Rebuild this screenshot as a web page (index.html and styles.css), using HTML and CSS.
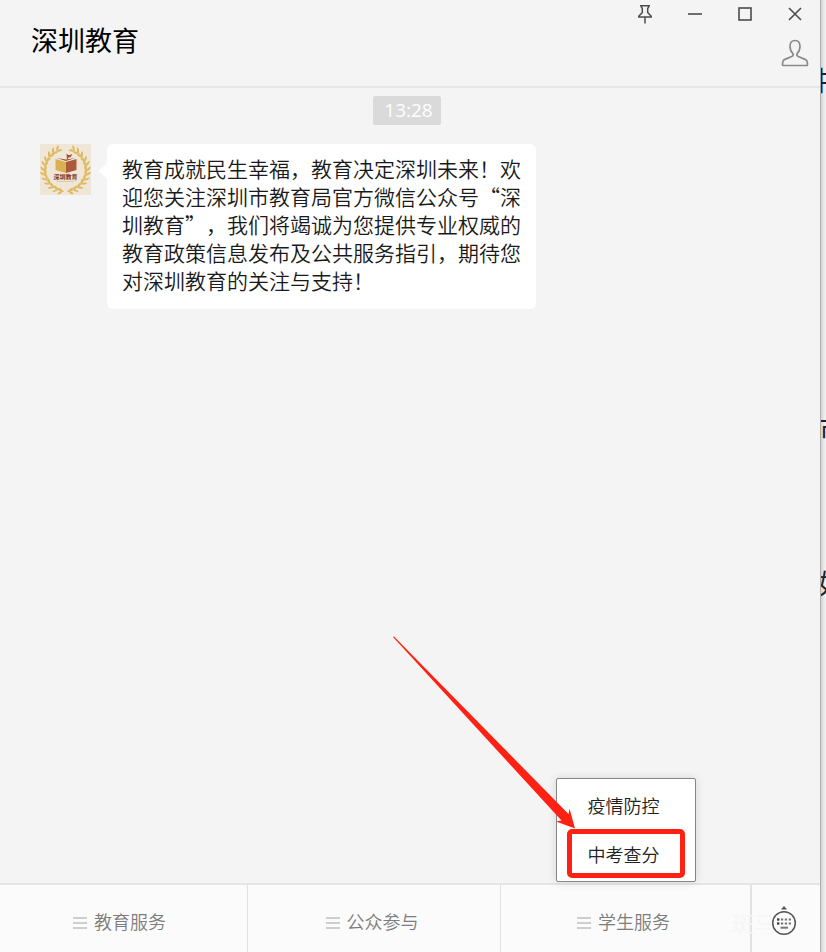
FILE: index.html
```html
<!DOCTYPE html>
<html lang="zh-CN">
<head>
<meta charset="utf-8">
<title>深圳教育</title>
<link rel="stylesheet" href="styles.css">
</head>
<body>
<div class="desktop">
  <div class="window">
    <header class="header">
      <h1 class="title">深圳教育</h1>
      <div class="tools">
        <div class="controls">
          <button class="control" type="button" aria-label="置顶">
            <svg width="16" height="20" viewBox="0 0 16 20" fill="none" stroke="#4c4c4c" stroke-width="1.5"><path d="M3 1.8H13M4.5 2v1.5L5.3 4.300V8.500L1.800 12.200V13H14.200V12.200L10.700 8.500V4.300L11.500 3.500V2M8 13V19.500"/></svg>
          </button>
          <button class="control" type="button" aria-label="最小化">
            <svg width="16" height="20" viewBox="0 0 16 20" stroke="#4c4c4c" stroke-width="1.6"><path d="M1 10H15"/></svg>
          </button>
          <button class="control" type="button" aria-label="最大化">
            <svg width="16" height="20" viewBox="0 0 16 20" fill="none" stroke="#4c4c4c" stroke-width="1.6"><rect x="2" y="4" width="12" height="12"/></svg>
          </button>
          <button class="control" type="button" aria-label="关闭">
            <svg width="16" height="20" viewBox="0 0 16 20" stroke="#4c4c4c" stroke-width="1.6"><path d="M2 4L14 16M14 4L2 16"/></svg>
          </button>
        </div>
        <button class="profile" type="button" aria-label="公众号资料">
          <svg width="28" height="28" viewBox="0 0 28 28" fill="none" stroke="#8a8a8a" stroke-width="1.700" stroke-linejoin="round"><path d="M14 1.500C10.800 1.500 9 4 9 7.200C9 10.500 10.200 12.800 11.800 14.500C12.400 15.500 12.200 16.600 11.200 17.200L3.500 20.600C1.800 21.400 1.500 22.500 1.500 25.800Q1.500 26.500 2.200 26.500H25.800Q26.500 26.500 26.500 25.800C26.500 22.500 26.200 21.400 24.500 20.600L16.800 17.200C15.800 16.600 15.600 15.500 16.200 14.500C17.800 12.800 19 10.500 19 7.200C19 4 17.200 1.500 14 1.500Z"/></svg>
        </button>
      </div>
    </header>

    <main class="chat">
      <time class="time">13:28</time>
      <div class="message">
        <svg class="avatar" viewBox="0 0 51 51" role="img" aria-label="深圳教育头像">
          <defs>
            <g id="sprig">
              <path d="M0 1Q-4-1-4-4Q0-3 0 1Z"/>
              <path d="M0 1Q3-1 2.500-5Q-1-3 0 1Z"/>
            </g>
            <g id="branch" fill="#dcb95c">
              <use href="#sprig" transform="translate(22 47) rotate(-80)"/>
              <use href="#sprig" transform="translate(17.500 45.500) rotate(-68)"/>
              <use href="#sprig" transform="translate(13 43) rotate(-56)"/>
              <use href="#sprig" transform="translate(9.500 39.500) rotate(-42)"/>
              <use href="#sprig" transform="translate(6.500 35.500) rotate(-28)"/>
              <use href="#sprig" transform="translate(4.800 31) rotate(-14)"/>
              <use href="#sprig" transform="translate(4.300 26.500) rotate(0)"/>
              <use href="#sprig" transform="translate(4.800 21.500) rotate(12)"/>
              <use href="#sprig" transform="translate(6.500 17) rotate(26)"/>
              <use href="#sprig" transform="translate(9.500 12.500) rotate(38)"/>
              <use href="#sprig" transform="translate(13 9) rotate(50)"/>
              <use href="#sprig" transform="translate(17 6.500) rotate(60)"/>
              <path d="M24 47.500A22 22 0 0 1 14 7.500" fill="none" stroke="#dcb95c" stroke-width=".8"/>
            </g>
          </defs>
          <rect width="51" height="51" fill="#f0e6d7"/>
          <use href="#branch"/>
          <use href="#branch" transform="matrix(-1 0 0 1 51 0)"/>
          <path d="M15.500 15L26 18V29L15.500 26Z" fill="#d9b052"/>
          <path d="M36.500 15L26 18V29L36.500 26Z" fill="#ad593b"/>
          <path d="M17 14L26 17L35 14L26 15.500Z" fill="#8d5b2d"/>
          <path d="M26.500 9.500Q29 12.500 32 10Q31.500 13.500 28.500 13.500L27 16" fill="#ad4932"/>
          <text class="seal" x="25.500" y="35" text-anchor="middle">深圳教育</text>
          <path d="M17 37.500H34" stroke="#cbb49a" stroke-width=".6"/>
        </svg>
        <p class="bubble">教育成就民生幸福，教育决定深圳未来！欢迎您关注深圳市教育局官方微信公众号“深圳教育”，我们将竭诚为您提供专业权威的教育政策信息发布及公共服务指引，期待您对深圳教育的关注与支持！</p>
      </div>
    </main>

    <nav class="menu">
      <div class="cell"><button class="entry" type="button"><span class="bars"></span>教育服务</button></div>
      <div class="cell"><button class="entry" type="button"><span class="bars"></span>公众参与</button></div>
      <div class="cell cell-last">
        <button class="entry" type="button"><span class="bars"></span>学生服务</button>
        <div class="popup">
          <button class="option" type="button">疫情防控</button>
          <button class="option marked" type="button">中考查分</button>
          <svg class="arrow" width="184" height="194" viewBox="0 0 184 194" fill="#ff2113"><path d="M0 1L1 .500L175.500 178L176.500 172.500L182 192.500L163 185.500L168.500 184.500Z"/></svg>
        </div>
      </div>
      <div class="cell keyboard">
        <span class="watermark">斑马</span>
        <button class="entry" type="button" aria-label="切换到键盘">
          <svg width="28" height="32" viewBox="0 0 28 32"><path d="M14 1L17 4.500H11Z" fill="#555"/><circle cx="14" cy="18" r="11.300" fill="none" stroke="#555" stroke-width="1.500"/><path d="M7 14.500H21M7 18.500H21" stroke="#777" stroke-width="2" stroke-dasharray="2.300 1.600"/><path d="M7 14.500H9.300M7 18.500H9.300" stroke="#444" stroke-width="2"/><path d="M10.500 22.700H18" stroke="#777" stroke-width="2"/></svg>
        </button>
      </div>
    </nav>
  </div>
  <div class="backdrop">
    <span class="glyph glyph-a">井</span>
    <span class="glyph glyph-b">市</span>
    <span class="glyph glyph-c">如</span>
  </div>
</div>
</body>
</html>
```
FILE: styles.css
```css
* {
  box-sizing: border-box;
}

body {
  margin: 0;
  font-family: "Noto Sans CJK SC", sans-serif;
  font-weight: 350;
  background: #fff;
}

button {
  margin: 0;
  padding: 0;
  border: 0;
  background: none;
  color: inherit;
  font: inherit;
}

svg {
  display: block;
}

.desktop {
  display: grid;
  grid-template-columns: 1fr 5px;
  min-height: 100vh;
}

.window {
  display: flex;
  flex-direction: column;
  border-right: 1px solid #adadad;
  background: #f4f4f4;
}

.header {
  display: flex;
  justify-content: space-between;
  height: 88px;
  padding-left: 31px;
  border-bottom: 2px solid #e6e6e6;
}

.title {
  margin: 20px 0 0;
  font-size: 27px;
  font-weight: 400;
  line-height: 40px;
  color: #000;
}

.tools {
  display: flex;
  flex-direction: column;
  align-items: flex-end;
}

.controls {
  display: flex;
  padding-top: 4px;
}

.control {
  display: flex;
  justify-content: center;
  width: 50px;
}

.profile {
  margin: 15px 11px 0 0;
}

.chat {
  display: flex;
  flex: 1;
  flex-direction: column;
  align-items: flex-start;
  padding: 8px 6px 24px 0;
}

.time {
  align-self: center;
  padding: 0 8px 0 11px;
  border-radius: 2px;
  background: #dadada;
  color: #fff;
  font-family: "Open Sans", sans-serif;
  font-size: 19px;
  font-weight: 400;
  line-height: 29px;
}

.message {
  display: flex;
  align-items: flex-start;
  gap: 16px;
  margin-top: 19px;
  padding-left: 40px;
}

.avatar {
  flex: none;
  width: 51px;
  height: 51px;
}

.seal {
  fill: #7d3526;
  font-size: 6px;
  font-weight: 700;
}

.bubble {
  position: relative;
  max-width: 429px;
  margin: 0;
  padding: 10px 14px 15px 15px;
  border-radius: 6px;
  background: #fff;
  color: #1a1a1a;
  font-size: 21px;
  line-height: 28px;
  text-spacing-trim: space-all;
}

.bubble::before {
  content: "";
  position: absolute;
  top: 19px;
  left: -8px;
  border: solid transparent;
  border-width: 8px 8px 8px 0;
  border-right-color: #fff;
}

.menu {
  display: grid;
  grid-template-columns: 248fr 253fr 251fr 68px;
  height: 69px;
  border-top: 2px solid #e5e5e5;
  background: #fbfbfb;
}

.cell {
  position: relative;
  display: flex;
  align-items: center;
  justify-content: center;
  padding-right: 8px;
  border-right: 1px solid #e2e2e2;
}

.cell + .cell {
  padding-right: 4px;
}

.cell-last {
  border-right-width: 2px;
}

.keyboard {
  border-right: 0;
}

.entry {
  display: flex;
  align-items: center;
  gap: 7px;
  margin-top: 4px;
  color: #7d7d7d;
  font-size: 18px;
  line-height: 28px;
}

.keyboard .entry {
  position: relative;
}

.bars {
  width: 14px;
  height: 12px;
  margin-top: 4px;
  border: solid #cdcfcd;
  border-width: 2px 0;
  background: linear-gradient(#cdcfcd, #cdcfcd) center / 100% 2px no-repeat;
}

.watermark {
  position: absolute;
  top: 20px;
  left: -20px;
  color: #f6f6f6;
  font-size: 22px;
  font-weight: 400;
  line-height: 34px;
}

.popup {
  position: absolute;
  bottom: 100%;
  left: 50%;
  width: 140px;
  margin: 0 0 3px -70px;
  padding: 2px 0;
  border: 1px solid #858585;
  border-radius: 2px;
  background: #fff;
  box-shadow: 0 0 10px rgba(0, 0, 0, 0.12);
}

.option {
  position: relative;
  display: block;
  width: 100%;
  padding-right: 4px;
  color: #222;
  font-size: 18px;
  line-height: 49px;
}

.marked::after {
  content: "";
  position: absolute;
  inset: -1px 10px 1px;
  border: 5px solid #ff2113;
  border-radius: 5px;
}

.arrow {
  position: absolute;
  top: -143px;
  left: -164px;
}

.backdrop {
  position: relative;
  overflow: hidden;
  background: linear-gradient(90deg, #d6d6d6, #f5f5f5);
  color: #222;
  font-size: 27px;
  font-weight: 400;
  line-height: 40px;
}

.glyph {
  position: absolute;
}

.glyph-a {
  top: 60px;
  right: -4px;
}

.glyph-b {
  top: 408px;
  left: -2px;
}

.glyph-c {
  top: 563px;
  left: -3px;
}
```
